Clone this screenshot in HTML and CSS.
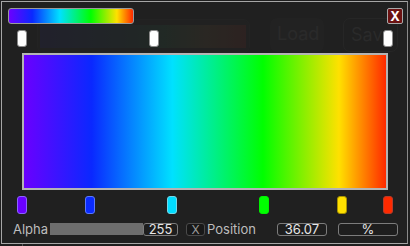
FILE: index.html
```html
<!DOCTYPE html>
<html lang="en">
<head>
    <meta charset="UTF-8">
    <meta name="viewport" content="width=device-width, initial-scale=1.0">
    <title>Gradient Editor</title>
    <link rel="stylesheet" href="styles.css">
</head>
<body>

<div class="backdrop">
    <div class="ghost-slider"><div class="ghost-track"></div></div>
    <div class="ghost-btn ghost-load">Load</div>
    <div class="ghost-btn ghost-save">Save</div>
    <div class="ghost-line"></div>
</div>

<div class="dialog">
    <div class="header">
        <div class="preview"></div>
        <button class="close">X</button>
    </div>

    <div class="track alpha-track">
        <span class="marker alpha" style="left: 0%"></span>
        <span class="marker alpha" style="left: 36.07%"></span>
        <span class="marker alpha" style="left: 100%"></span>
    </div>

    <div class="gradient"></div>

    <div class="track color-track">
        <span class="marker purple" style="left: 0%"></span>
        <span class="marker blue" style="left: 18.7%"></span>
        <span class="marker cyan" style="left: 41.1%"></span>
        <span class="marker green" style="left: 66.1%"></span>
        <span class="marker yellow" style="left: 87.3%"></span>
        <span class="marker red" style="left: 100%"></span>
    </div>

    <div class="controls">
        <span class="label alpha-label">Alpha</span>
        <div class="bar"></div>
        <div class="field value">255</div>
        <button class="small">X</button>
        <span class="label">Position</span>
        <div class="field pos">36.07</div>
        <div class="field unit">%</div>
    </div>
</div>

</body>
</html>
```

FILE: styles.css
```css
body {
    margin: 0;
    background-color: #1f1f1f;
    font-family: Inter, "Noto Sans", sans-serif;
    width: 410px;
    height: 246px;
    overflow: hidden;
    position: relative;
}

/* faded editor behind the popup */
.backdrop {
    position: absolute;
    left: 0;
    top: 0;
    width: 410px;
    height: 246px;
}
.ghost-slider {
    position: absolute;
    left: 37px;
    top: 19px;
    width: 213px;
    height: 34px;
    box-sizing: border-box;
    border: 1px solid #272727;
    border-radius: 7px;
    background-color: #222222;
}
.ghost-track {
    margin: 5px 3px 0 2px;
    height: 23px;
    background: linear-gradient(to right, #22223a, #232a30 35%, #22332a 60%, #353026 80%, #3c2422);
}
.ghost-btn {
    position: absolute;
    top: 18px;
    height: 34px;
    box-sizing: border-box;
    border-radius: 7px;
    color: #363636;
    font-size: 18px;
    line-height: 32px;
    padding-left: 7px;
}
.ghost-load {
    left: 270px;
    width: 54px;
    background-color: #252525;
}
.ghost-save {
    left: 343px;
    width: 55px;
    border: 1px solid #2e2e2e;
}
.ghost-line {
    position: absolute;
    left: 22px;
    top: 243px;
    width: 1px;
    height: 3px;
    background-color: #555;
}

.dialog {
    position: relative;
    margin: 1px 0 0 1px;
    width: 407px;
    height: 243px;
    box-sizing: border-box;
    border: 1px solid #a6a6a6;
    border-right-color: #8a8a8a;
    background-color: rgba(32, 32, 32, 0.55);
    display: flex;
    flex-direction: column;
}

.header {
    display: flex;
    justify-content: space-between;
    margin: 6px 4px 0 6px;
    height: 16px;
}
.preview {
    width: 126px;
    height: 16px;
    box-sizing: border-box;
    border: 1px solid #9a9a9a;
    border-radius: 3px;
    background: linear-gradient(to right, #6c00ff, #0a28ff 18.7%, #00e1ff 41%, #00ff00 66%, #ffe100 87%, #ff2a00);
}
.close {
    width: 16px;
    height: 16px;
    padding: 0;
    box-sizing: border-box;
    border: 1px solid #a8a8a8;
    border-radius: 2px;
    background-color: #6b1212;
    color: #ffffff;
    font-family: Inter, sans-serif;
    font-weight: bold;
    font-size: 13px;
    line-height: 14px;
}

.track {
    position: relative;
    margin: 6px 0 0 20px;
    width: 366px;
}
.alpha-track {
    height: 17px;
}
.color-track {
    height: 18px;
}
.marker {
    position: absolute;
    top: 0;
    width: 10px;
    height: 100%;
    box-sizing: border-box;
    border: 1px solid;
    border-radius: 3px;
    transform: translateX(-50%);
}
.alpha {
    background-color: #ffffff;
    border-color: #8a8a8a;
}
.purple { background-color: #6a00ff; border-color: #8c62ff; }
.blue { background-color: #0a2bff; border-color: #5a78ff; }
.cyan { background-color: #00dcff; border-color: #70d8ea; }
.green { background-color: #00ff00; border-color: #00f000; }
.yellow { background-color: #ffe000; border-color: #a89200; }
.red { background-color: #ff2a00; border-color: #b83a28; }

.gradient {
    margin: 6px 0 0 20px;
    width: 366px;
    height: 137px;
    box-sizing: border-box;
    border: 2px solid #b4b4b4;
    background: linear-gradient(to right, #6a00ff, #0a28ff 18.7%, #00e1ff 41%, #00ff00 66%, #ffe100 87%, #ff2a00);
}

.controls {
    display: flex;
    align-items: center;
    margin: 8px 0 0 11px;
    height: 14px;
}
.label {
    color: #bdbdbd;
    font-size: 13px;
}
.alpha-label {
    width: 37px;
}
.bar {
    width: 93px;
    height: 12px;
    background-color: #6e6e6e;
}
.field {
    height: 13px;
    box-sizing: border-box;
    border: 1px solid #7c7c7c;
    border-radius: 3px;
    background-color: #1e1e1e;
    color: #e6e6e6;
    font-size: 13px;
    line-height: 11px;
    text-align: center;
}
.value {
    width: 35px;
    margin-right: 8px;
}
.small {
    width: 19px;
    height: 13px;
    padding: 0;
    margin-right: 2px;
    box-sizing: border-box;
    border: 1px solid #4a4a4a;
    border-radius: 3px;
    background-color: #181818;
    color: #9a9a9a;
    font-family: Inter, sans-serif;
    font-size: 12px;
    line-height: 11px;
}
.pos {
    width: 50px;
    margin-left: 21px;
}
.unit {
    width: 60px;
    margin-left: 11px;
}
```
